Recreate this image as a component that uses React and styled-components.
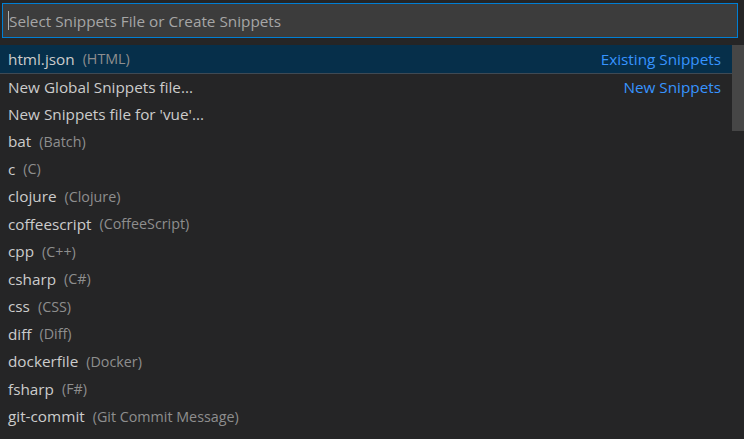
import React from "react";
import styled, { createGlobalStyle } from "styled-components";

const GlobalStyle = createGlobalStyle`
  html, body {
    margin: 0;
    padding: 0;
    background: #252526;
  }
  body {
    font-family: "Open Sans", "Noto Sans", sans-serif;
  }
`;

const items = [
  { label: "html.json", desc: "(HTML)", tag: "Existing Snippets", selected: true },
  { label: "New Global Snippets file...", tag: "New Snippets", separator: true },
  { label: "New Snippets file for 'vue'..." },
  { label: "bat", desc: "(Batch)" },
  { label: "c", desc: "(C)" },
  { label: "clojure", desc: "(Clojure)" },
  { label: "coffeescript", desc: "(CoffeeScript)" },
  { label: "cpp", desc: "(C++)" },
  { label: "csharp", desc: "(C#)" },
  { label: "css", desc: "(CSS)" },
  { label: "diff", desc: "(Diff)" },
  { label: "dockerfile", desc: "(Docker)" },
  { label: "fsharp", desc: "(F#)" },
  { label: "git-commit", desc: "(Git Commit Message)" },
];

export default function App() {
  return (
    <>
      <GlobalStyle />
      <QuickPick>
        <InputWrap>
          <Input>
            <Caret />
            <Placeholder>Select Snippets File or Create Snippets</Placeholder>
          </Input>
        </InputWrap>
        <ListArea>
          <List>
            {items.map((it) => (
              <Row key={it.label} selected={it.selected} separator={it.separator}>
                <Label>{it.label}</Label>
                {it.desc && <Desc>{it.desc}</Desc>}
                {it.tag && <Tag>{it.tag}</Tag>}
              </Row>
            ))}
          </List>
          <Scrollbar>
            <Thumb />
          </Scrollbar>
        </ListArea>
      </QuickPick>
    </>
  );
}

const QuickPick = styled.div`
  width: 744px;
  height: 439px;
  background: #252526;
  overflow: hidden;
  display: flex;
  flex-direction: column;
`;

const InputWrap = styled.div`
  padding: 3px 6px 7px 2px;
`;

const Input = styled.div`
  height: 33px;
  background: #3c3c3c;
  border: 1px solid #007fd4;
  display: flex;
  align-items: center;
  padding-left: 5px;
  box-sizing: content-box;
`;

const Caret = styled.span`
  width: 1px;
  height: 19px;
  background: #aeafad;
`;

const Placeholder = styled.span`
  color: #a6a6a6;
  font-size: 15.3px;
  white-space: nowrap;
`;

const ListArea = styled.div`
  display: flex;
  flex: 1;
  min-height: 0;
`;

const List = styled.div`
  flex: 1;
  display: flex;
  flex-direction: column;
`;

const Row = styled.div`
  height: 27.5px;
  flex: none;
  display: flex;
  align-items: center;
  padding: 0 11px 0 8px;
  box-sizing: border-box;
  background: ${(p) => (p.selected ? "#062f4a" : "transparent")};
  border-top: ${(p) => (p.separator ? "1px solid #3f4a54" : "none")};
  white-space: nowrap;
`;

const Label = styled.span`
  color: #cccccc;
  font-size: 15.3px;
`;

const Desc = styled.span`
  color: #8e8e8e;
  font-size: 14.3px;
  margin-left: 8px;
`;

const Tag = styled.span`
  margin-left: auto;
  color: #3794ff;
  font-size: 15.3px;
`;

const Scrollbar = styled.div`
  width: 12px;
  flex: none;
`;

const Thumb = styled.div`
  height: 86px;
  background: rgba(121, 121, 121, 0.4);
`;
